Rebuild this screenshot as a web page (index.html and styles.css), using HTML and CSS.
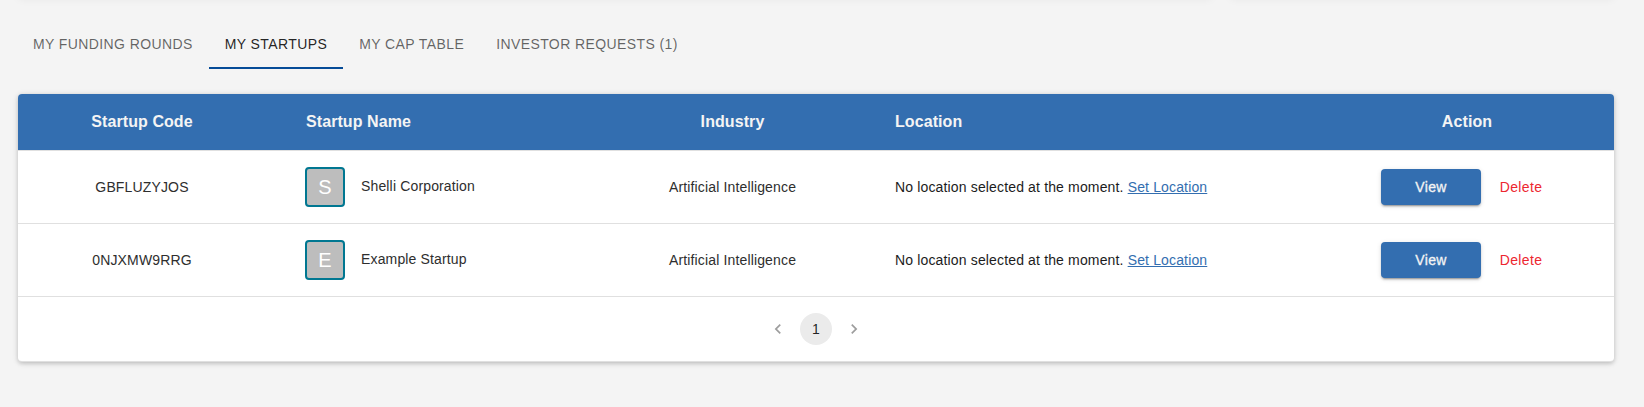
FILE: index.html
```html
<!DOCTYPE html>
<html lang="en">
<head>
<meta charset="utf-8">
<title>My Startups</title>
<link rel="stylesheet" href="styles.css">
</head>
<body>
<div class="summary">
  <section class="panel panel-main"></section>
  <section class="panel panel-side"></section>
</div>
<nav class="tabs">
  <a class="tab">My Funding Rounds</a>
  <a class="tab active">My Startups</a>
  <a class="tab">My Cap Table</a>
  <a class="tab">Investor Requests (1)</a>
</nav>
<main class="card">
  <table class="startups">
    <colgroup><col class="c-code"><col class="c-name"><col class="c-industry"><col class="c-location"><col class="c-action"></colgroup>
    <thead>
      <tr><th>Startup Code</th><th class="name">Startup Name</th><th>Industry</th><th class="location">Location</th><th>Action</th></tr>
    </thead>
    <tbody>
      <tr>
        <td>GBFLUZYJOS</td>
        <td class="name"><div class="startup"><span class="avatar">S</span><span class="label">Shelli Corporation</span></div></td>
        <td>Artificial Intelligence</td>
        <td class="location">No location selected at the moment. <a class="link">Set Location</a></td>
        <td><div class="actions"><button class="view">View</button><button class="delete">Delete</button></div></td>
      </tr>
      <tr>
        <td>0NJXMW9RRG</td>
        <td class="name"><div class="startup"><span class="avatar">E</span><span class="label">Example Startup</span></div></td>
        <td>Artificial Intelligence</td>
        <td class="location">No location selected at the moment. <a class="link">Set Location</a></td>
        <td><div class="actions"><button class="view">View</button><button class="delete">Delete</button></div></td>
      </tr>
    </tbody>
  </table>
  <div class="pagination">
    <span class="page arrow"><svg viewBox="0 0 24 24"><path d="M15.41 7.41L14 6l-6 6 6 6 1.41-1.41L10.83 12z"/></svg></span>
    <span class="page current">1</span>
    <span class="page arrow"><svg viewBox="0 0 24 24"><path d="M10 6L8.59 7.41 13.17 12l-4.58 4.59L10 18l6-6z"/></svg></span>
  </div>
</main>
</body>
</html>
```
FILE: styles.css
```css
* { box-sizing: border-box; }
body {
  margin: 0;
  padding: 0 30px 0 18px;
  height: 407px;
  overflow: hidden;
  background: #f4f4f4;
  font-family: "Liberation Sans", Arial, sans-serif;
  font-size: 14px;
  line-height: 20px;
  color: rgba(0, 0, 0, 0.87);
}
.summary { display: flex; gap: 18px; height: 40px; margin-top: -43px; }
.panel { border-radius: 4px; background: #fff; box-shadow: 0 2px 10px rgba(0, 0, 0, 0.06); }
.panel-main { width: 1194px; }
.panel-side { flex: 1; }
.tabs { display: flex; margin: 24px 0 25px -1px; }
.tab {
  height: 48px;
  padding: 13px 16px 0;
  letter-spacing: 0.4px;
  text-transform: uppercase;
  color: rgba(0, 0, 0, 0.6);
}
.tab.active { color: rgba(0, 0, 0, 0.87); border-bottom: 2px solid #054b97; }
.card {
  height: 268px;
  overflow: hidden;
  border-radius: 4px;
  border-bottom: 1px solid #e0e0e0;
  background: #fff;
  box-shadow: 0 2px 4px -1px rgba(0, 0, 0, 0.1), 0 1px 5px rgba(0, 0, 0, 0.14), 0 1px 8px rgba(0, 0, 0, 0.06);
}
.startups { width: 100%; table-layout: fixed; border-collapse: separate; border-spacing: 0; }
.c-code { width: 248px; }
.c-name { width: 320px; }
.c-industry { width: 293px; }
.c-location { width: 441px; }
.c-action { width: 294px; }
th {
  height: 57px;
  padding: 0 16px;
  border-bottom: 1px solid #e0e0e0;
  background: #336eb0;
  background-clip: padding-box;
  font-size: 16px;
  line-height: 24px;
  letter-spacing: 0.08px;
  color: #f4f4f4;
}
td {
  height: 73px;
  padding: 0 16px;
  border-bottom: 1px solid #e0e0e0;
  text-align: center;
  letter-spacing: 0.15px;
  color: #2e2e2e;
}
.name { padding-left: 39px; text-align: left; }
th.name { padding-left: 40px; }
.location { text-align: left; }
td.location { color: #1c1c1c; }
.startup { display: flex; align-items: center; gap: 16px; }
.avatar {
  display: flex;
  align-items: center;
  justify-content: center;
  width: 40px;
  height: 40px;
  border: 2px solid #007791;
  border-radius: 4px;
  background: #bdbdbd;
  color: #fff;
  font-size: 20px;
}
.label { padding-bottom: 2px; }
.link { color: #336eb0; text-decoration: underline; }
.actions { display: flex; justify-content: center; gap: 8px; }
button {
  height: 36px;
  padding: 0;
  border: 0;
  border-radius: 4px;
  font: inherit;
}
.view {
  width: 100px;
  background: #336eb0;
  color: #f4f4f4;
  letter-spacing: 0.3px;
  -webkit-text-stroke: 0.3px #f4f4f4;
  box-shadow: 0 3px 1px -2px rgba(0, 0, 0, 0.2), 0 2px 2px rgba(0, 0, 0, 0.14), 0 1px 5px rgba(0, 0, 0, 0.12);
}
.delete { width: 64px; background: none; color: #ed2630; letter-spacing: 0.35px; }
.pagination { display: flex; align-items: center; justify-content: center; gap: 6px; height: 64px; }
.page { display: flex; align-items: center; justify-content: center; width: 32px; height: 32px; border-radius: 50%; }
.current { background: #ebebeb; }
.arrow { opacity: 0.38; }
.arrow svg { width: 20px; height: 20px; }
```
